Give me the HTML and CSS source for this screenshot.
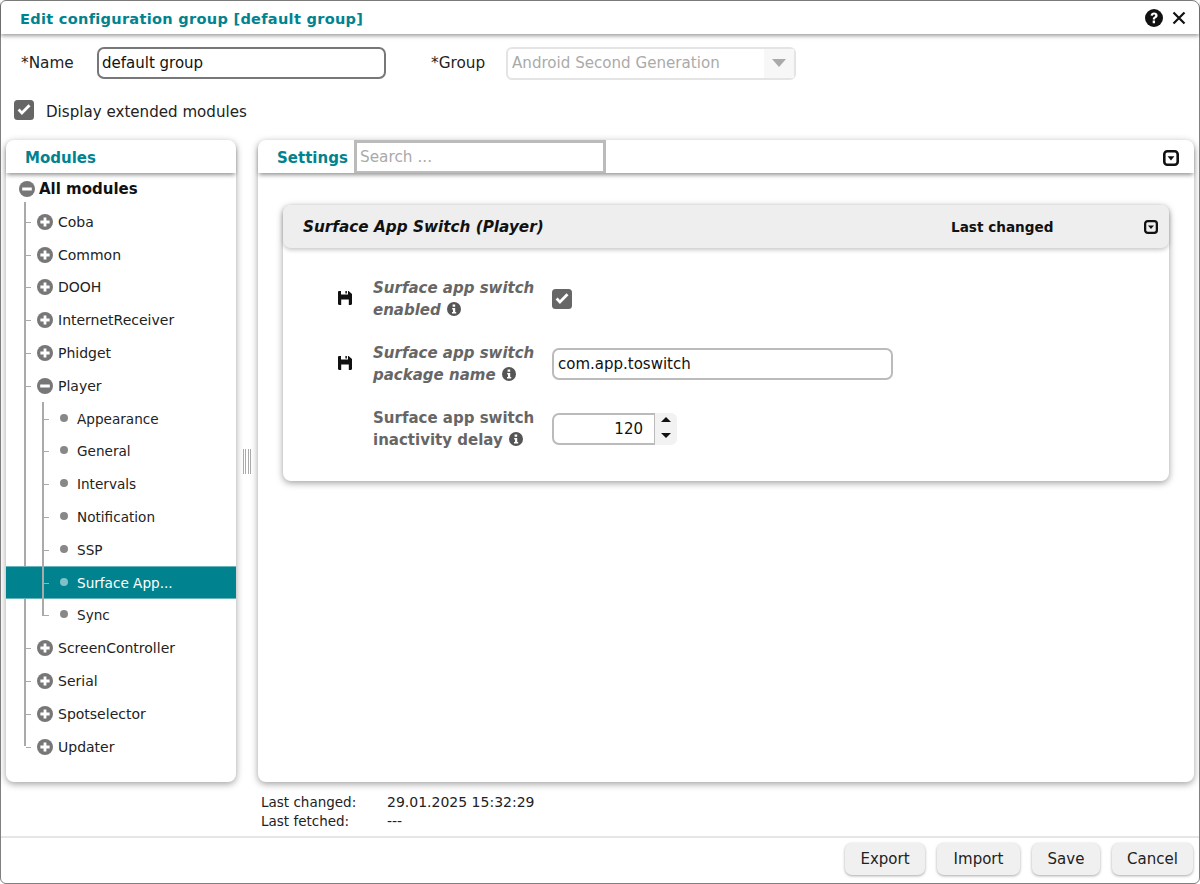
FILE: index.html
```html
<!DOCTYPE html>
<html lang="en">
<head>
<meta charset="utf-8">
<title>Edit configuration group</title>
<link rel="stylesheet" href="styles.css">
</head>
<body>
<svg class="defs" width="0" height="0" aria-hidden="true">
  <symbol id="plus" viewBox="0 0 16 16"><circle cx="8" cy="8" r="8" fill="currentColor"/><path d="M6.6 3.4h2.8v3.2h3.2v2.8H9.4v3.2H6.6V9.4H3.4V6.6h3.2z" fill="#fff"/></symbol>
  <symbol id="minus" viewBox="0 0 16 16"><circle cx="8" cy="8" r="8" fill="currentColor"/><rect x="3.2" y="6.5" width="9.6" height="3" fill="#fff"/></symbol>
  <symbol id="caret" viewBox="0 0 16 16"><rect x="1.3" y="1.3" width="13.4" height="13.4" rx="3" fill="none" stroke="currentColor" stroke-width="2.6"/><path d="M4.6 6.2h6.8L8 10.4z" fill="currentColor"/></symbol>
  <symbol id="save" viewBox="0 0 14 14"><path d="M1.2 0H3v3.6h7V0h.6L14 3v9.8c0 .7-.5 1.2-1.2 1.2H1.2C.5 14 0 13.5 0 12.8V1.2C0 .5.5 0 1.2 0zM3.2 8.4V14h7.6V8.4zM7.4 0h1.5v2.6H7.4z" fill="currentColor" fill-rule="evenodd"/></symbol>
  <symbol id="info" viewBox="0 0 14 14"><circle cx="7" cy="7" r="7" fill="currentColor"/><path d="M5.6 2.6h2.6v2.2H5.6zM5.2 6h3v4h1v1.6H5V10h1V7.5h-.8z" fill="#fff"/></symbol>
  <symbol id="check" viewBox="0 0 20 20"><rect width="20" height="20" rx="3.5" fill="currentColor"/><path d="M3.6 10.6l4.3 4.3 8.6-8.6-2-2-6.6 6.6-2.3-2.3z" fill="#fff"/></symbol>
</svg>
<main class="dialog">
  <header class="titlebar">
    <h1 class="title">Edit configuration group [default group]</h1>
    <div class="title-tools">
      <svg class="help" viewBox="0 0 18 18" aria-hidden="true"><circle cx="9" cy="9" r="9" fill="currentColor"/><path d="M5.6 6.6C5.8 4.6 7.2 3.6 9.1 3.6c2 0 3.5 1.2 3.5 2.9 0 1.4-.8 2-1.7 2.6-.6.4-.9.7-.9 1.4H7.8c0-1.4.5-2.2 1.4-2.8.6-.4 1-.7 1-1.2 0-.5-.5-.9-1.1-.9-.7 0-1.1.4-1.3 1.2zM7.7 11.6H10v2.6H7.7z" fill="#fff"/></svg>
      <svg class="close" viewBox="0 0 14 14" aria-hidden="true"><path d="M1.5 1.5l11 11M12.5 1.5l-11 11" stroke="currentColor" stroke-width="2.2" fill="none"/></svg>
    </div>
  </header>

  <div class="form-row">
    <label class="form-label name-label" for="group-name">*Name</label>
    <input id="group-name" class="name-input" type="text" value="default group">
    <span class="form-label group-label">*Group</span>
    <div class="select">
      <span class="select-value">Android Second Generation</span>
      <span class="select-arrow"><i class="arrow-down"></i></span>
    </div>
  </div>

  <div class="extended-row">
    <svg class="checkbox"><use href="#check"/></svg>
    <span class="extended-text">Display extended modules</span>
  </div>

  <div class="workspace">
    <aside class="panel modules">
      <div class="panel-head"><h2 class="panel-title modules-title">Modules</h2></div>
      <div class="tree">
        <div class="tree-root"><svg class="node-icon"><use href="#minus"/></svg><span>All modules</span></div>
        <ul class="branch">
          <li class="row"><svg class="node-icon"><use href="#plus"/></svg>Coba</li>
          <li class="row"><svg class="node-icon"><use href="#plus"/></svg>Common</li>
          <li class="row"><svg class="node-icon"><use href="#plus"/></svg>DOOH</li>
          <li class="row"><svg class="node-icon"><use href="#plus"/></svg>InternetReceiver</li>
          <li class="row"><svg class="node-icon"><use href="#plus"/></svg>Phidget</li>
          <li class="group">
            <div class="row"><svg class="node-icon"><use href="#minus"/></svg>Player</div>
            <ul class="subbranch">
              <li class="leaf"><i class="dot"></i>Appearance</li>
              <li class="leaf"><i class="dot"></i>General</li>
              <li class="leaf"><i class="dot"></i>Intervals</li>
              <li class="leaf"><i class="dot"></i>Notification</li>
              <li class="leaf"><i class="dot"></i>SSP</li>
              <li class="leaf selected"><i class="dot"></i>Surface App...</li>
              <li class="leaf"><i class="dot"></i>Sync</li>
            </ul>
          </li>
          <li class="row"><svg class="node-icon"><use href="#plus"/></svg>ScreenController</li>
          <li class="row"><svg class="node-icon"><use href="#plus"/></svg>Serial</li>
          <li class="row"><svg class="node-icon"><use href="#plus"/></svg>Spotselector</li>
          <li class="row"><svg class="node-icon"><use href="#plus"/></svg>Updater</li>
        </ul>
      </div>
    </aside>

    <div class="splitter"><i class="grip"></i></div>

    <section class="panel settings">
      <div class="panel-head settings-head">
        <h2 class="panel-title settings-title">Settings</h2>
        <input class="search" type="text" placeholder="Search ...">
        <svg class="toggle"><use href="#caret"/></svg>
      </div>
      <div class="settings-body">
        <article class="card">
          <div class="card-head">
            <h3 class="card-title">Surface App Switch (Player)</h3>
            <span class="card-changed">Last changed</span>
            <svg class="toggle small"><use href="#caret"/></svg>
          </div>
          <div class="card-body">
            <div class="field">
              <span class="save-slot"><svg class="save"><use href="#save"/></svg></span>
              <div class="field-label modified">Surface app switch enabled <svg class="info"><use href="#info"/></svg></div>
              <svg class="checkbox field-check"><use href="#check"/></svg>
            </div>
            <div class="field">
              <span class="save-slot"><svg class="save"><use href="#save"/></svg></span>
              <div class="field-label modified">Surface app switch package name <svg class="info"><use href="#info"/></svg></div>
              <input class="text-input" type="text" value="com.app.toswitch">
            </div>
            <div class="field">
              <span class="save-slot"></span>
              <div class="field-label">Surface app switch inactivity delay <svg class="info"><use href="#info"/></svg></div>
              <div class="number">
                <input class="number-input" type="text" value="120">
                <div class="spinner"><i class="spin-up"></i><i class="spin-down"></i></div>
              </div>
            </div>
          </div>
        </article>
      </div>
    </section>
  </div>

  <dl class="meta">
    <div class="meta-row"><dt>Last changed:</dt><dd>29.01.2025 15:32:29</dd></div>
    <div class="meta-row"><dt>Last fetched:</dt><dd>---</dd></div>
  </dl>

  <footer class="actions">
    <button class="btn btn-export">Export</button>
    <button class="btn btn-import">Import</button>
    <button class="btn btn-save">Save</button>
    <button class="btn btn-cancel">Cancel</button>
  </footer>
</main>
</body>
</html>
```

FILE: styles.css
```css
* { box-sizing: border-box; }
html, body { height: 100%; }
body {
  margin: 0;
  background: #fff;
  color: #111;
  font-family: "DejaVu Sans", Verdana, sans-serif;
  font-size: 14px;
  overflow: hidden;
}
.defs { position: absolute; }
ul { list-style: none; margin: 0; padding: 0; }
h1, h2, h3 { margin: 0; }
i { display: block; }
input { font: inherit; color: inherit; outline: none; }

.dialog {
  height: 884px;
  display: flex;
  flex-direction: column;
  border: 1px solid #808080;
  border-radius: 6px 8px 6px 6px;
  background: #fff;
}

.titlebar {
  height: 33px;
  flex: none;
  display: flex;
  align-items: center;
  justify-content: space-between;
  padding: 0 13px 0 19px;
  box-shadow: 0 2px 4px rgba(0,0,0,.38);
  position: relative;
}
.title { font-size: 14.55px; font-weight: bold; color: #00838f; letter-spacing: .02em; padding-top: 1px; }
.title-tools { display: flex; align-items: center; gap: 9px; color: #111; }
.help { width: 18px; height: 18px; }
.close { width: 14px; height: 14px; }

.form-row {
  height: 32px;
  margin-top: 13px;
  flex: none;
  display: flex;
  align-items: center;
  padding-left: 20px;
}
.form-label { font-size: 15.3px; color: #222; }
.name-label { width: 76px; }
.name-input {
  width: 289px;
  height: 32px;
  border: 2px solid #777;
  border-radius: 7px;
  padding: 0 3px;
  font-size: 15px;
}
.group-label { margin-left: 45px; width: 75px; }
.select {
  width: 290px;
  height: 33px;
  border: 2px solid #e4e4e4;
  border-radius: 6px;
  display: flex;
  align-items: center;
  justify-content: space-between;
  color: #aaa;
  font-size: 15.1px;
  padding-left: 4px;
}
.select-arrow {
  width: 30px;
  height: 100%;
  background: #f7f7f7;
  display: flex;
  align-items: center;
  justify-content: center;
}
.arrow-down { border: 7px solid transparent; border-top: 8px solid #aaa; border-bottom: 0; }

.extended-row {
  flex: none;
  height: 20px;
  margin-top: 21px;
  padding-left: 13px;
  display: flex;
  align-items: center;
  gap: 12px;
  font-size: 15.1px;
  color: #222;
}
.extended-text { padding-top: 4px; }
.checkbox { width: 20px; height: 20px; color: #666; flex: none; }

.workspace {
  flex: none;
  height: 642px;
  margin-top: 20px;
  padding-left: 5px;
  display: flex;
}
.panel {
  background: #fff;
  border-radius: 8px;
  box-shadow: 0 2px 7px rgba(0,0,0,.38);
  display: flex;
  flex-direction: column;
}
.modules { width: 230px; flex: none; }
.splitter { width: 22px; flex: none; display: flex; align-items: center; justify-content: center; }
.grip {
  width: 8px;
  height: 25px;
  margin-left: -1px;
  border: 1px solid #aaa;
  border-width: 0 1px;
  background: linear-gradient(90deg, #fff 0 1px, #aaa 1px 2px, #fff 2px 4px, #aaa 4px 5px, #fff 5px);
}
.settings { width: 936px; flex: none; }

.panel-head {
  height: 33px;
  flex: none;
  display: flex;
  align-items: center;
  border-radius: 8px 8px 0 0;
  box-shadow: 0 3px 4px -1px rgba(0,0,0,.42);
  position: relative;
}
.panel-title { font-size: 15px; font-weight: bold; color: #00838f; padding-top: 2px; }
.modules-title { padding-left: 19px; }
.settings-title { padding-left: 19px; width: 96px; flex: none; }
.search {
  width: 252px;
  height: 33px;
  border: 3px solid #bbb;
  border-bottom-width: 2px;
  padding: 0 3px;
  font-size: 15.3px;
  border-radius: 0;
}
.search::placeholder { color: #aaa; opacity: 1; }
.toggle { width: 16px; height: 16px; color: #111; margin: 2px 15px 0 auto; flex: none; }
.toggle.small { width: 14px; height: 14px; margin: 1px 0 0 91px; }

.tree { position: relative; padding-top: 3px; }
.tree-root {
  height: 26px;
  display: flex;
  align-items: center;
  gap: 4px;
  padding-left: 13px;
  font-weight: bold;
  font-size: 15px;
  color: #111;
}
.node-icon { width: 16px; height: 16px; color: #777; flex: none; }
.branch { position: relative; margin-top: 3.4px; }
.branch::before {
  content: "";
  position: absolute;
  left: 18px;
  top: -3px;
  bottom: 17px;
  width: 2px;
  background: #aaa;
}
.row {
  height: 32.8px;
  display: flex;
  align-items: center;
  gap: 5px;
  padding-left: 31px;
  position: relative;
  color: #222;
  font-size: 14px;
}
.row::before {
  content: "";
  position: absolute;
  left: 20px;
  top: 50%;
  width: 5px;
  height: 1px;
  background: #aaa;
}
.subbranch { position: relative; }
.subbranch::before {
  content: "";
  position: absolute;
  left: 36px;
  top: 0;
  bottom: 16px;
  width: 2px;
  background: #aaa;
  z-index: 1;
}
.leaf {
  height: 32.8px;
  display: flex;
  align-items: center;
  gap: 9px;
  padding-left: 54px;
  position: relative;
  color: #222;
  font-size: 13.6px;
}
.leaf::before {
  content: "";
  position: absolute;
  left: 38px;
  top: 50%;
  width: 5px;
  height: 1px;
  background: #aaa;
}
.dot { width: 8px; height: 8px; border-radius: 50%; background: #888; margin-top: -2px; }
.selected {
  background: #00838f;
  color: #fff;
  box-shadow: inset 0 1px 0 #66b5bc, inset 0 -1px 0 #66b5bc;
}
.selected .dot { background: #80c1c7; }

.settings-body { padding: 32px 25px 0; flex: 1; }
.card {
  width: 886px;
  height: 276px;
  border-radius: 8px;
  box-shadow: 0 2px 7px rgba(0,0,0,.38);
}
.card-head {
  height: 43px;
  background: #eee;
  border-radius: 8px;
  display: flex;
  align-items: center;
  padding-left: 20px;
  box-shadow: 0 2px 4px rgba(0,0,0,.22);
}
.card-title { font-size: 15.25px; font-weight: bold; font-style: italic; color: #111; width: 648px; flex: none; }
.card-changed { font-size: 13.6px; font-weight: bold; color: #111; }
.card-body { padding-top: 29px; }
.field {
  height: 44px;
  margin-bottom: 21px;
  display: flex;
  align-items: center;
}
.save-slot { width: 90px; padding-left: 55px; display: flex; align-items: center; flex: none; }
.save { width: 14px; height: 14px; color: #111; margin-top: -2px; }
.field-label {
  width: 179px;
  flex: none;
  font-size: 15px;
  line-height: 22px;
  font-weight: bold;
  color: #666;
}
.modified { font-style: italic; }
.info { width: 14px; height: 14px; color: #555; vertical-align: -1px; margin-left: 1px; }
.text-input {
  width: 341px;
  height: 32px;
  border: 2px solid #bbb;
  border-radius: 7px;
  padding: 0 4px;
  font-size: 15px;
}
.number { display: flex; align-items: stretch; height: 32px; }
.number-input {
  width: 104px;
  border: 2px solid #bbb;
  border-radius: 7px 0 0 7px;
  text-align: right;
  padding: 0 11px;
  font-size: 15px;
}
.spinner {
  width: 22px;
  background: #f2f2f2;
  border-radius: 0 6px 6px 0;
  display: flex;
  flex-direction: column;
  justify-content: space-between;
  align-items: center;
  padding: 4px 0 7px;
  margin-left: -1px;
}
.spin-up { border: 5px solid transparent; border-bottom: 5px solid #111; border-top: 0; }
.spin-down { border: 5px solid transparent; border-top: 5px solid #111; border-bottom: 0; }

.meta { margin: 10px 0 0; padding-left: 260px; font-size: 13.5px; color: #222; flex: none; }
.meta-row { display: flex; height: 19px; align-items: center; }
.meta dt { width: 126px; }
.meta dd { margin: 0; font-size: 14px; }

.actions {
  flex: 1;
  border-top: 2px solid #e6e6e6;
  margin-top: 6px;
  display: flex;
  justify-content: flex-end;
  align-items: flex-start;
  gap: 12px;
  padding: 5px 6px 0 0;
}
.btn {
  height: 32px;
  border: 0;
  border-radius: 7px;
  background: #f0f0f0;
  box-shadow: 0 1px 3px rgba(0,0,0,.35);
  font-family: inherit;
  font-size: 15px;
  color: #222;
  padding: 0;
}
.btn-export { width: 80px; }
.btn-import { width: 83px; }
.btn-save { width: 68px; }
.btn-cancel { width: 81px; }
```
